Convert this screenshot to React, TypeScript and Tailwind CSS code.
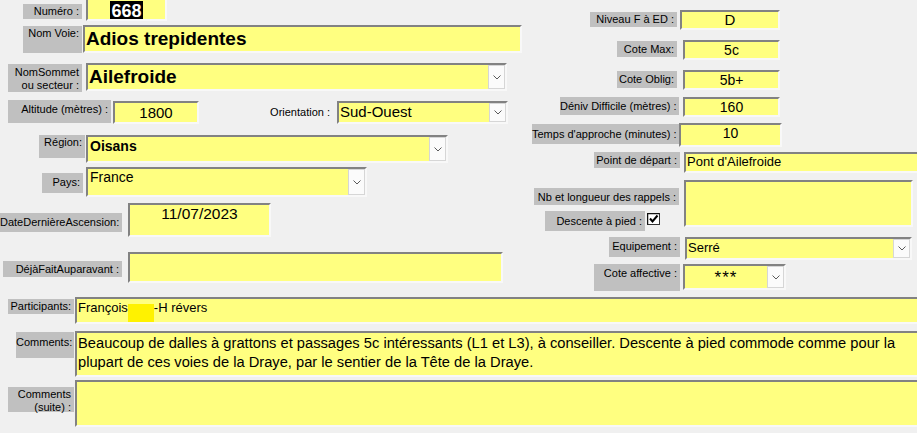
// Access-style climbing route form ("Voie") with grey caption boxes and yellow inputs.
import type { ReactNode } from 'react';

const Chevron = () => (
  <svg width="8" height="5" viewBox="0 0 8 5" className="block">
    <path d="M0.5 0.5 L4 4 L7.5 0.5" fill="none" stroke="#5a5a5a" strokeWidth="1" />
  </svg>
);

function Caption({ className, children }: { className: string; children: ReactNode }) {
  return (
    <div className={`shrink-0 whitespace-nowrap bg-[#c0c0c0] pr-[3px] pt-[1px] text-right text-[11px] leading-[13px] text-black ${className}`}>
      {children}
    </div>
  );
}

function Field({ className, children }: { className: string; children?: ReactNode }) {
  return (
    <div
      className={`shrink-0 overflow-hidden border-2 border-t-[#828282] border-l-[#828282] border-b-[#f8f8f8] border-r-[#f8f8f8] bg-[#ffff80] text-black ${className}`}
    >
      {children}
    </div>
  );
}

function Combo({ className, children }: { className: string; children?: ReactNode }) {
  return (
    <Field className={`flex ${className}`}>
      <div className="min-w-0 flex-1">{children}</div>
      <div className="flex w-[17px] shrink-0 items-center justify-center border border-[#d6d6d6] bg-[#fbfbfb]">
        <Chevron />
      </div>
    </Field>
  );
}

export default function App() {
  return (
    <div className="h-[433px] w-[917px] overflow-hidden bg-[#f0f0f0] font-['Liberation_Sans',Arial,sans-serif]">
      <div className="flex h-[297px]">
        {/* Left block */}
        <div className="flex w-[530px] shrink-0 flex-col">
          <div className="flex h-[25px] items-start">
            <Caption className="ml-[23px] mt-[4px] h-[15px] w-[59px]">Numéro :</Caption>
            <Field className="ml-[4px] h-[21px] w-[81px] border-t-0 text-center">
              <span className="bg-black px-[1px] text-[18px] font-bold leading-[19px] text-white">668</span>
            </Field>
          </div>

          <div className="flex h-[38px] items-start">
            <Caption className="ml-[23px] mt-[1px] h-[27px] w-[59px]">Nom Voie:</Caption>
            <Field className="ml-[1px] h-[28px] w-[439px] pl-[1px] text-[19px] font-bold leading-[24px]">
              Adios trepidentes
            </Field>
          </div>

          <div className="flex h-[37px] items-start">
            <Caption className="ml-[8px] mt-[1px] h-[28px] w-[74px] pt-[2px] leading-[12px]">
              NomSommet
              <br />
              ou secteur :
            </Caption>
            <Combo className="ml-[4px] h-[28px] w-[421px] text-[19px] font-bold leading-[24px]">
              <div className="pl-[1px]">Ailefroide</div>
            </Combo>
          </div>

          <div className="flex h-[35px] items-start">
            <Caption className="ml-[8px] h-[23px] w-[103px] pt-[3px]">Altitude (mètres) :</Caption>
            <Field className="ml-[2px] mt-[1px] h-[23px] w-[86px] text-center text-[15px] leading-[19px]">1800</Field>
            <div className="ml-[69px] mt-[6px] w-[62px] text-right text-[11px] leading-[13px] text-black">
              Orientation :
            </div>
            <Combo className="ml-[7px] mt-[1px] h-[23px] w-[171px] text-[15px] leading-[18px]">
              <div className="pl-[1px]">Sud-Ouest</div>
            </Combo>
          </div>

          <div className="flex h-[32px] items-start">
            <Caption className="ml-[39px] h-[23px] w-[46px]">Région:</Caption>
            <Combo className="ml-[1px] h-[28px] w-[362px] text-[14px] font-bold leading-[18px]">
              <div className="pl-[2px]">Oisans</div>
            </Combo>
          </div>

          <div className="flex h-[36px] items-start">
            <Caption className="ml-[42px] mt-[6px] h-[20px] w-[41px] pt-[3px]">Pays:</Caption>
            <Combo className="ml-[3px] h-[30px] w-[281px] text-[14px] leading-[16px]">
              <div className="pl-[2px]">France</div>
            </Combo>
          </div>

          <div className="flex h-[49px] items-start">
            <Caption className="ml-0 mt-[10px] h-[19px] w-[122px] pt-[3px]">DateDernièreAscension:</Caption>
            <Field className="ml-[6px] h-[34px] w-[143px] text-center text-[15.5px] leading-[17px]">11/07/2023</Field>
          </div>

          <div className="flex h-[45px] items-start">
            <Caption className="ml-[3px] mt-[9px] h-[16px] w-[119px] pt-[2px]">DéjàFaitAuparavant :</Caption>
            <Field className="ml-[6px] h-[31px] w-[375px]" />
          </div>
        </div>

        {/* Right block */}
        <div className="flex flex-1 flex-col">
          <div className="flex h-[40px] items-start">
            <Caption className="ml-[60px] mt-[12px] h-[15px] w-[87px]">Niveau F à ED :</Caption>
            <Field className="ml-[3px] mt-[10px] h-[20px] w-[100px] text-center text-[15px] leading-[16px]">D</Field>
          </div>

          <div className="flex h-[30px] items-start">
            <Caption className="ml-[87px] mt-[1px] h-[16px] w-[60px] pt-[2px]">Cote Max:</Caption>
            <Field className="ml-[6px] h-[20px] w-[97px] text-center text-[14px] leading-[16px]">5c</Field>
          </div>

          <div className="flex h-[27px] items-start">
            <Caption className="ml-[87px] mt-[1px] h-[17px] w-[60px] pt-[2px]">Cote Oblig:</Caption>
            <Field className="ml-[6px] h-[20px] w-[97px] text-center text-[14px] leading-[16px]">5b+</Field>
          </div>

          <div className="flex h-[26px] items-start">
            <Caption className="ml-[30px] h-[18px] w-[119px] pt-[3px]">Déniv Difficile (mètres) :</Caption>
            <Field className="ml-[4px] h-[20px] w-[97px] text-center text-[14px] leading-[16px]">160</Field>
          </div>

          <div className="flex h-[29px] items-start">
            <Caption className="ml-[2px] mt-[1px] h-[20px] w-[147px] pr-[2px] pt-[4px] text-[10.6px]">
              Temps d'approche (minutes) :
            </Caption>
            <Field className="ml-0 h-[24px] w-[103px] text-center text-[14px] leading-[16px]">10</Field>
          </div>

          <div className="flex h-[28px] items-start">
            <Caption className="ml-[64px] h-[16px] w-[86px] pt-[2px]">Point de départ :</Caption>
            <Field className="ml-[4px] h-[21px] w-[233px] border-r-0 pl-[1px] text-[13px] leading-[16px]">
              Pont d'Ailefroide
            </Field>
          </div>

          <div className="flex h-[57px] items-start">
            <div className="flex w-[149px] shrink-0 flex-col">
              <Caption className="ml-[4px] mt-[8px] h-[17px] w-[145px] pt-[3px]">Nb et longueur des rappels :</Caption>
              <div className="ml-[15px] mt-[6px] flex items-start">
                <Caption className="h-[20px] w-[100px] pt-[4px]">Descente à pied :</Caption>
                <svg width="13" height="12" viewBox="0 0 13 12" className="ml-[2px] mt-[2px] block">
                  <rect x="0.5" y="0.5" width="12" height="11" fill="#ffffff" stroke="#333333" />
                  <path d="M0.5 11.5 V0.5 H12.5" fill="none" stroke="#111111" strokeWidth="1.5" />
                  <path d="M3 5.5 L5.5 8.5 L10.5 2.5" fill="none" stroke="#000000" strokeWidth="2" />
                </svg>
              </div>
            </div>
            <Field className="ml-[5px] h-[47px] w-[229px]" />
          </div>

          <div className="flex h-[27px] items-start">
            <Caption className="ml-[79px] h-[20px] w-[71px] pt-[3px]">Equipement :</Caption>
            <Combo className="ml-[5px] h-[23px] w-[227px] text-[13px] leading-[17px]">
              <div className="pl-[1px]">Serré</div>
            </Combo>
          </div>

          <div className="flex h-[33px] items-start">
            <Caption className="ml-[64px] h-[27px] w-[86px] pt-[3px]">Cote affective :</Caption>
            <Combo className="ml-[3px] h-[26px] w-[103px] text-[17px] leading-[22px]">
              <div className="pt-[1px] text-center tracking-[1px]">***</div>
            </Combo>
          </div>
        </div>
      </div>

      {/* Bottom full-width rows */}
      <div className="flex h-[34px] items-start">
        <Caption className="ml-[8px] mt-[2px] h-[15px] w-[66px] text-[10px]">Participants:</Caption>
        <Field className="ml-[1px] flex h-[27px] w-[842px] items-start border-r-0 pl-[1px] text-[13px] leading-[17px]">
          <span>François</span>
          <span className="mt-[5px] block h-[19px] w-[26px] bg-[#fff200]" />
          <span>-H révers</span>
        </Field>
      </div>

      <div className="flex h-[49px] items-start">
        <Caption className="ml-[16px] mt-[1px] h-[26px] w-[58px] pt-[4px]">Comments:</Caption>
        <Field className="ml-[1px] h-[46px] w-[842px] border-r-0 pl-[1px] pt-[1px] text-[14.7px] leading-[19px]">
          Beaucoup de dalles à grattons et passages 5c intéressants (L1 et L3), à conseiller. Descente à pied commode comme pour la
          plupart de ces voies de la Draye, par le sentier de la Tête de la Draye.
        </Field>
      </div>

      <div className="flex h-[53px] items-start">
        <Caption className="ml-[8px] mt-[7px] h-[25px] w-[66px] pt-[1px] leading-[12px]">
          Comments
          <br />
          (suite) :
        </Caption>
        <Field className="ml-[1px] h-[47px] w-[842px] border-r-0" />
      </div>
    </div>
  );
}
